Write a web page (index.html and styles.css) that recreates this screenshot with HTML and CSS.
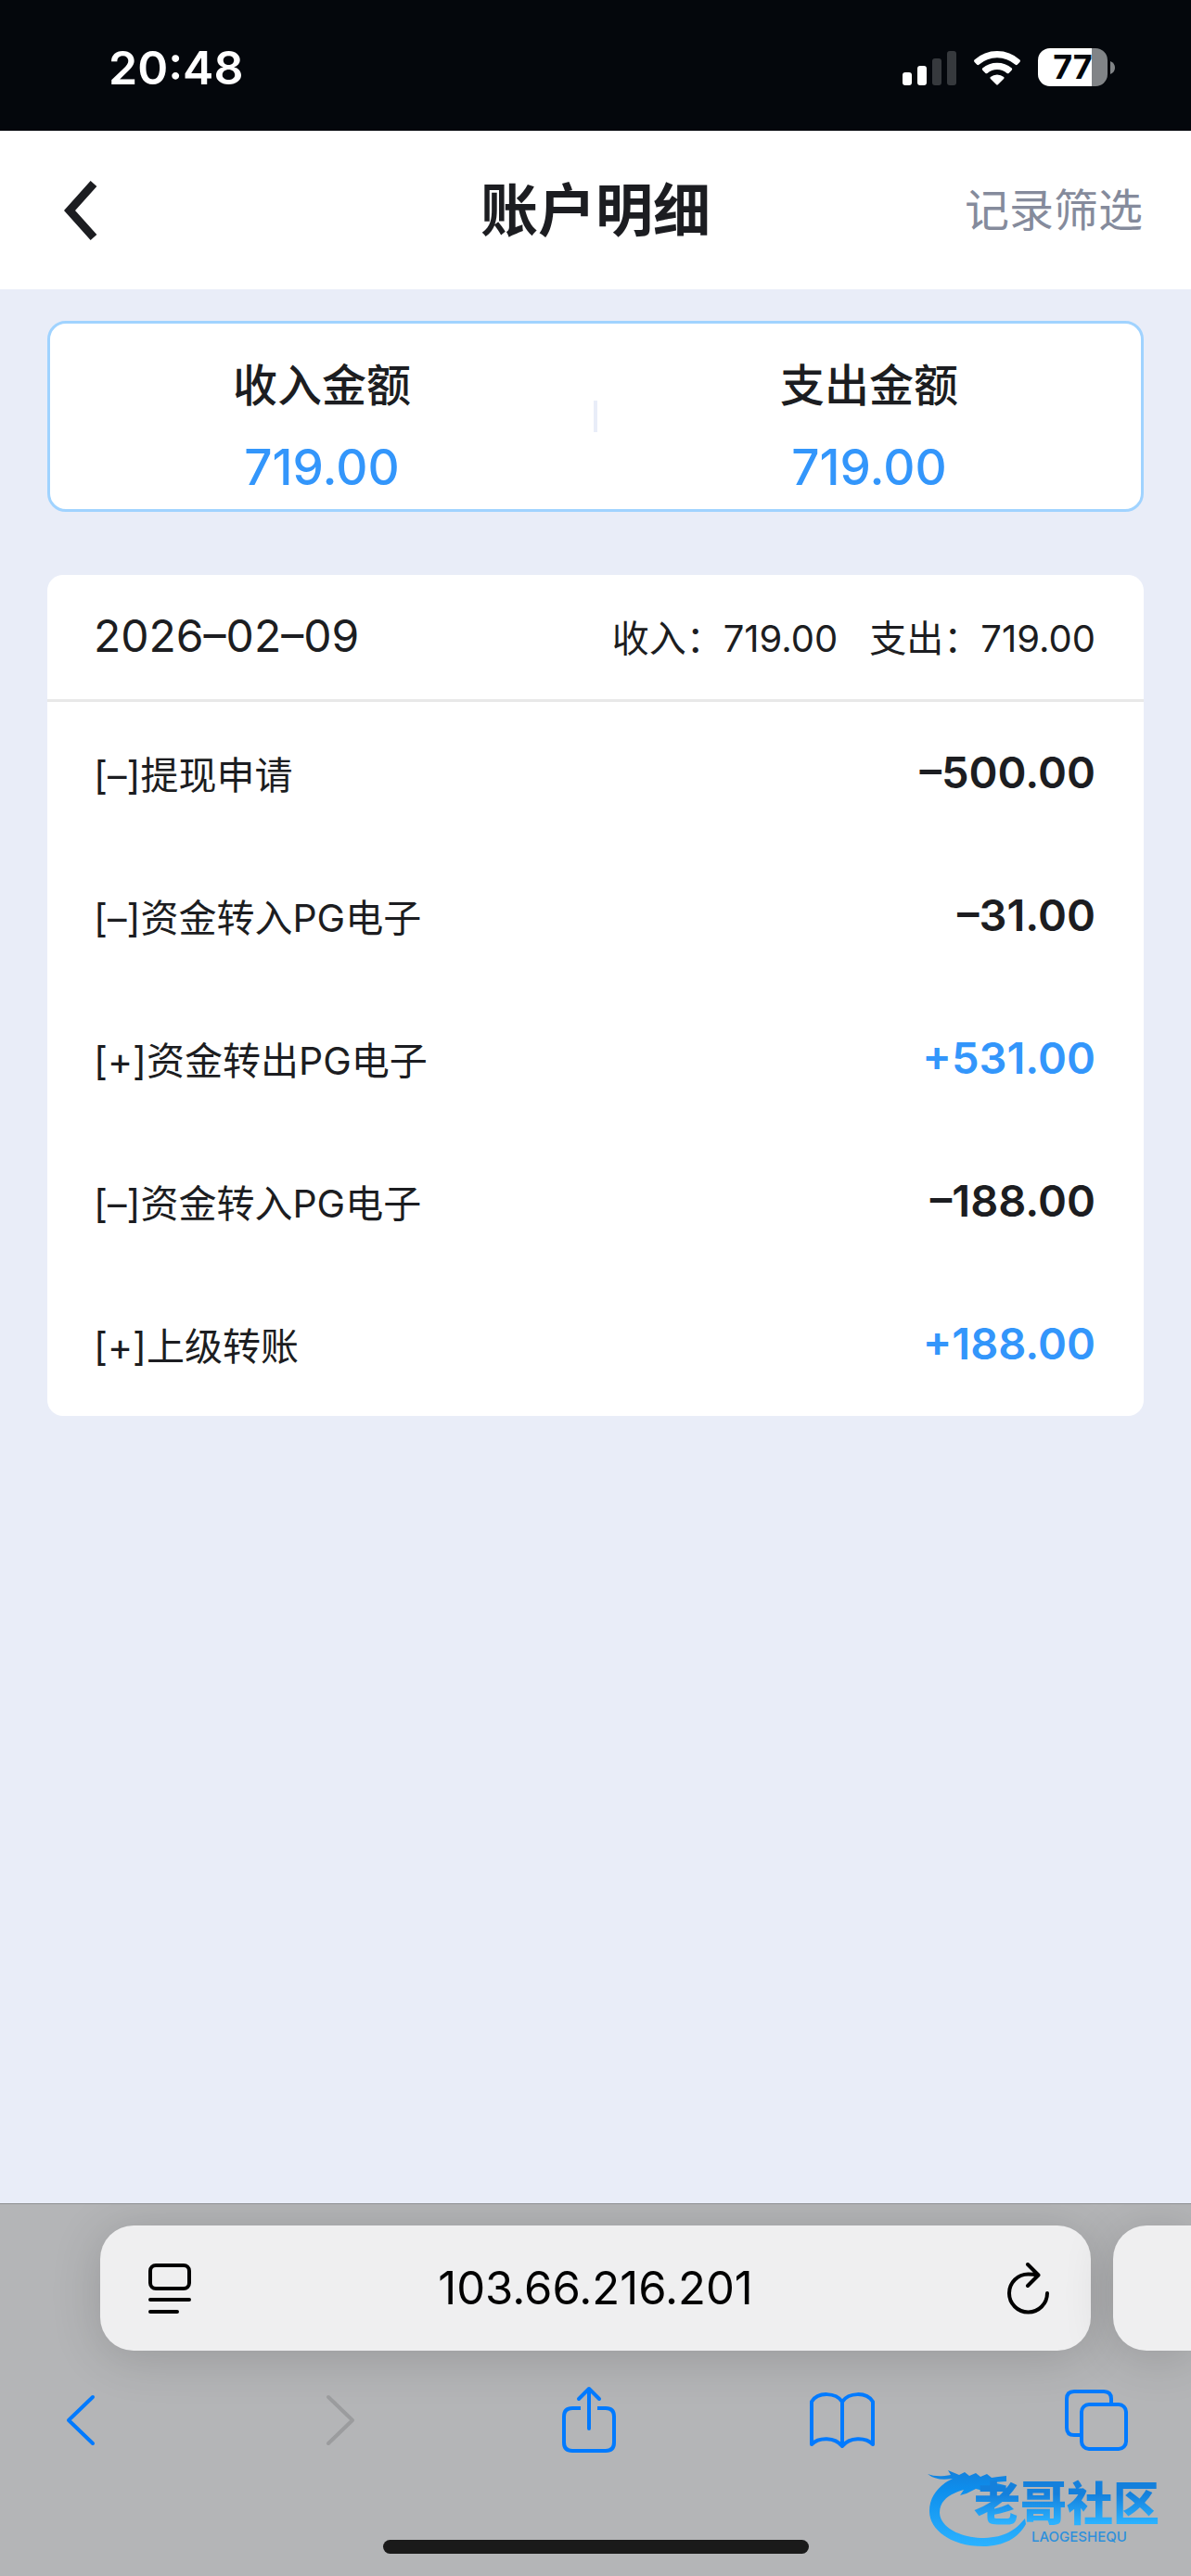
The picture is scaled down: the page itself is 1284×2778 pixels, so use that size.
FILE: index.html
```html
<!DOCTYPE html>
<html lang="zh-CN">
<head>
<meta charset="utf-8">
<meta name="viewport" content="width=device-width, initial-scale=1">
<title>账户明细</title>
<link rel="stylesheet" href="styles.css">
</head>
<body>
<div class="status-bar">
  <time class="clock">20:48</time>
  <div class="indicators">
    <svg class="signal" width="58" height="38" viewBox="0 0 58 38" aria-hidden="true">
      <rect x="0" y="24" width="10" height="14" rx="3" fill="#fff"/>
      <rect x="16" y="17" width="10" height="21" rx="3" fill="#fff"/>
      <rect x="32" y="9" width="10" height="29" rx="3" fill="#36393d"/>
      <rect x="48" y="1" width="10" height="37" rx="3" fill="#36393d"/>
    </svg>
    <svg class="wifi" width="52" height="38" viewBox="0 0 52 38" fill="#fff" aria-hidden="true">
      <path d="M1.500 10.500 Q0.400 11.700 1.600 12.900 L4.300 15.700 Q5.300 16.600 6.300 15.700 Q15 8.200 26 8.200 Q37 8.200 45.700 15.700 Q46.700 16.600 47.700 15.700 L50.400 12.900 Q51.600 11.700 50.500 10.500 Q40 1 26 1 Q12 1 1.500 10.500Z"/>
      <path d="M10.200 19.600 Q9.300 20.600 10.300 21.700 L13.500 24.900 Q14.400 25.700 15.400 24.900 Q20 21 26 21 Q32 21 36.600 24.900 Q37.600 25.700 38.500 24.900 L41.700 21.700 Q42.700 20.600 41.800 19.600 Q35 13.800 26 13.800 Q17 13.800 10.200 19.600Z"/>
      <path d="M18.800 29 Q17.900 30 18.900 31 L25.200 37.300 Q26 38 26.800 37.300 L33.100 31 Q34.100 30 33.200 29 Q30 26.500 26 26.500 Q22 26.500 18.800 29Z"/>
    </svg>
    <div class="battery">
      <span class="battery-body">77</span>
      <svg width="5" height="14" viewBox="0 0 5 14" aria-hidden="true"><path d="M0 0 Q5 2 5 7 Q5 12 0 14Z" fill="#818487"/></svg>
    </div>
  </div>
</div>

<header class="nav">
  <button class="nav-back" type="button" aria-label="返回">
    <svg width="36" height="64" viewBox="0 0 36 64" fill="none" stroke="#1c1d21" stroke-width="9"><path d="M32 3 L6 32 L32 61"/></svg>
  </button>
  <h1 class="nav-title">账户明细</h1>
  <button class="nav-filter" type="button">记录筛选</button>
</header>

<main class="content">
  <section class="summary">
    <div class="summary-item">
      <span class="summary-label">收入金额</span>
      <span class="summary-value">719.00</span>
    </div>
    <div class="summary-divider"></div>
    <div class="summary-item">
      <span class="summary-label">支出金额</span>
      <span class="summary-value">719.00</span>
    </div>
  </section>

  <section class="day">
    <div class="day-head">
      <h2 class="day-date">2026–02–09</h2>
      <div class="day-totals"><span>收入：719.00</span><span>支出：719.00</span></div>
    </div>
    <ul class="records">
      <li class="record"><span>[–]提现申请</span><span class="amount">–500.00</span></li>
      <li class="record"><span>[–]资金转入PG电子</span><span class="amount">–31.00</span></li>
      <li class="record"><span>[+]资金转出PG电子</span><span class="amount amount-in">+531.00</span></li>
      <li class="record"><span>[–]资金转入PG电子</span><span class="amount">–188.00</span></li>
      <li class="record"><span>[+]上级转账</span><span class="amount amount-in">+188.00</span></li>
    </ul>
  </section>
</main>

<footer class="browser">
  <div class="tabs">
    <div class="address">
      <button class="address-menu" type="button" aria-label="页面设置">
        <svg width="46" height="56" viewBox="0 0 46 56" fill="none" stroke="#000" stroke-width="4" stroke-linecap="round"><rect x="2" y="3" width="42" height="25" rx="6"/><path d="M2 40 H44 M2 53 H31"/></svg>
      </button>
      <button class="address-text" type="button">103.66.216.201</button>
      <button class="address-reload" type="button" aria-label="重新载入">
        <svg width="46" height="56" viewBox="0 0 46 56" fill="none" stroke="#000" stroke-width="4" stroke-linecap="round" stroke-linejoin="round"><path d="M43 33 A20.500 20.500 0 1 1 22.500 12.500 Q28 12.500 33 13.500 M22 2 L33.500 13.500 L22 25"/></svg>
      </button>
    </div>
    <div class="next-tab"></div>
  </div>
  <nav class="toolbar">
    <button class="tool" type="button" aria-label="后退">
      <svg width="32" height="56" viewBox="0 0 32 56"><path d="M29 3 L3 28 L29 53"/></svg>
    </button>
    <button class="tool tool-off" type="button" aria-label="前进" disabled>
      <svg width="44" height="56" viewBox="0 0 44 56"><path d="M15 3 L41 28 L15 53"/></svg>
    </button>
    <button class="tool" type="button" aria-label="分享">
      <svg width="58" height="76" viewBox="0 0 58 76"><path stroke-linecap="butt" d="M20 25 H11 Q2 25 2 34 V62 Q2 71 11 71 H47 Q56 71 56 62 V34 Q56 25 47 25 H38"/><path d="M29 47 V4 M18 15 L29 4 L40 15"/></svg>
    </button>
    <button class="tool" type="button" aria-label="书签">
      <svg width="72" height="62" viewBox="0 0 72 62"><path d="M36 59 V11 C29 1 10 0 3 11 V57 C11 49 28 49 36 59 C44 49 61 49 69 57 V11 C62 0 43 1 36 11"/></svg>
    </button>
    <button class="tool" type="button" aria-label="标签页">
      <svg width="68" height="66" viewBox="0 0 68 66"><path stroke-linecap="butt" d="M16 49 H10 Q2 49 2 41 V10 Q2 2 10 2 H42 Q50 2 50 10 V16"/><rect x="18" y="16" width="48" height="48" rx="8"/></svg>
    </button>
  </nav>
  <div class="home-indicator"></div>
</footer>

<div class="watermark">
  <svg class="watermark-dragon" width="108" height="88" viewBox="0 0 108 88" aria-hidden="true">
    <defs><linearGradient id="dragon" x1="0" y1="0" x2="0" y2="1"><stop offset="0" stop-color="#1480dc"/><stop offset=".25" stop-color="#0d8eed"/><stop offset="1" stop-color="#2bb2ff"/></linearGradient></defs>
    <path fill="url(#dragon)" d="M0 8 Q10 12 25 9 L22 4 L34 9 L40 6 L45 10 L52 7 L57 11 L64 8 L69 12 L76 11 L85 10 L85 16 L70 17 L83 20 L82 26 L72 24 L60 26 L52 24 L42 29 L35 31 L39 25 C26 29 13 35 13 50 C14 66 36 77 61 77 C84 76 94 69 105 56 L106 62 C98 77 82 86 60 86 C28 86 2 70 2 48 C2 31 14 19 27 13 Q10 16 0 8Z"/>
  </svg>
  <div class="watermark-text">
    <span class="watermark-name">老哥社区</span>
    <span class="watermark-latin">LAOGESHEQU</span>
  </div>
</div>
</body>
</html>
```

FILE: styles.css
```css
* { box-sizing: border-box; }

body {
  margin: 0;
  min-height: 100vh;
  display: flex;
  flex-direction: column;
  position: relative;
  overflow-x: hidden;
  background: #e9edf8;
  color: #1c1d21;
  font-family: Inter, "Noto Sans CJK SC", sans-serif;
}

button {
  display: flex;
  align-items: center;
  justify-content: center;
  margin: 0;
  padding: 0;
  border: 0;
  background: none;
  color: inherit;
  font: inherit;
}

svg { display: block; }

.status-bar {
  display: flex;
  align-items: center;
  justify-content: space-between;
  height: 141px;
  padding: 4px 82px 0 117px;
  background: #04070c;
  color: #fff;
}

.clock {
  font-size: 50px;
  font-weight: 600;
}

.indicators,
.battery {
  display: flex;
  align-items: center;
}

.indicators { gap: 18px; }

.battery { gap: 3px; }

.battery-body {
  width: 75px;
  height: 41px;
  border-radius: 13px;
  background: linear-gradient(to right, #fff 58px, #818487 58px);
  color: #04070c;
  font-size: 36px;
  font-weight: 700;
  line-height: 41px;
  text-align: center;
}

.nav {
  display: grid;
  grid-template-columns: 1fr auto 1fr;
  align-items: center;
  height: 171px;
  padding: 0 52px;
  background: #fff;
}

.nav-back {
  justify-self: start;
  padding-left: 17px;
}

.nav-title {
  margin: 0;
  padding-bottom: 8px;
  font-size: 62px;
  font-weight: 600;
}

.nav-filter {
  justify-self: end;
  padding-bottom: 8px;
  color: #858b9c;
  font-size: 48px;
}

.content {
  flex: 1;
  display: flex;
  flex-direction: column;
  gap: 68px;
  padding: 34px 51px;
}

.summary {
  display: flex;
  align-items: center;
  height: 206px;
  border: 3px solid #a0d3ff;
  border-radius: 20px;
  background: #fff;
}

.summary-item {
  flex: 1;
  display: flex;
  flex-direction: column;
  align-items: center;
  padding-top: 22px;
}

.summary-label {
  font-size: 48px;
  font-weight: 500;
  line-height: 88px;
}

.summary-value {
  color: #3396fb;
  font-size: 53px;
  font-weight: 500;
  line-height: 88px;
}

.summary-divider {
  width: 4px;
  height: 34px;
  background: #e9edf8;
}

.day {
  border-radius: 17px;
  background: #fff;
}

.day-head {
  display: flex;
  align-items: center;
  justify-content: space-between;
  height: 137px;
  padding: 0 52px 3px 50px;
  border-bottom: 3px solid #e8e8e8;
}

.day-date {
  margin: 0;
  font-size: 48px;
  font-weight: 400;
}

.day-totals {
  display: flex;
  gap: 34px;
  font-size: 40px;
}

.records {
  margin: 0;
  padding: 0;
  list-style: none;
}

.record {
  display: flex;
  align-items: center;
  justify-content: space-between;
  height: 154px;
  padding: 0 52px 3px 50px;
  font-size: 41px;
}

.amount {
  font-size: 47px;
  font-weight: 600;
}

.amount-in { color: #3396fb; }

.browser {
  overflow: hidden;
  border-top: 1px solid #8e8f91;
  background: #b4b5b7;
}

.tabs {
  display: flex;
  gap: 24px;
  padding: 23px 0 0 108px;
}

.address,
.next-tab {
  height: 135px;
  border-radius: 36px;
  background: #efeff0;
  box-shadow: 0 6px 54px rgba(0, 0, 0, 0.16);
}

.address {
  flex: 1;
  display: grid;
  grid-template-columns: 1fr auto 1fr;
  align-items: center;
  padding: 0 44px;
  color: #000;
}

.address-menu {
  justify-self: start;
  padding-left: 8px;
}

.address-text { font-size: 49px; }

.address-reload { justify-self: end; }

.next-tab {
  width: 84px;
  border-radius: 36px 0 0 36px;
}

.toolbar {
  display: flex;
  align-items: center;
  justify-content: space-between;
  height: 150px;
  padding: 0 66px 0 51px;
}

.tool {
  width: 72px;
  height: 90px;
}

.tool svg {
  fill: none;
  stroke: #007aff;
  stroke-width: 4;
  stroke-linecap: round;
  stroke-linejoin: round;
}

.tool-off svg { stroke: #9b9c9e; }

.home-indicator {
  width: 459px;
  height: 15px;
  margin: 54px auto 24px;
  border-radius: 8px;
  background: #1a1a1a;
}

.watermark {
  position: absolute;
  right: 20px;
  bottom: 28px;
  width: 264px;
  height: 90px;
}

.watermark-dragon {
  position: absolute;
  left: 0;
  top: 0;
}

.watermark-text {
  position: absolute;
  left: 50px;
  top: 14px;
  display: flex;
  flex-direction: column;
}

.watermark-name {
  background: linear-gradient(#1480dc 30%, #2bb2ff 90%);
  -webkit-background-clip: text;
  background-clip: text;
  color: transparent;
  font-size: 50px;
  font-weight: 900;
  line-height: 52px;
}

.watermark-latin {
  padding-left: 62px;
  color: #2d90dc;
  font-size: 15px;
  font-weight: 500;
  line-height: 20px;
}
```
